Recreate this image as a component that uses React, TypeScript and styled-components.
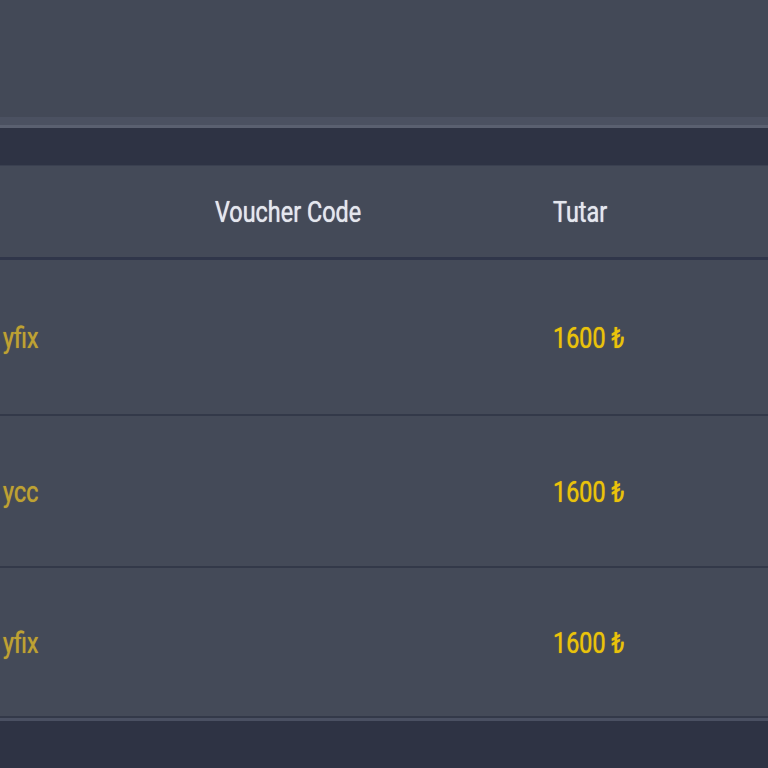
import React from "react";
import styled, { createGlobalStyle } from "styled-components";

const GlobalStyle = createGlobalStyle`
  html, body {
    margin: 0;
    padding: 0;
    background: #2e3344;
    overflow: hidden;
  }
  body {
    font-family: Roboto, "Liberation Sans", sans-serif;
  }
`;

const Page = styled.div`
  width: 768px;
  height: 768px;
  display: flex;
  flex-direction: column;
  background: #2e3344;
`;

const TopPanel = styled.div`
  height: 117px;
  background: #434957;
  border-bottom: 8px solid #4b5161;
  box-shadow: 0 3px 0 #5a6070;
`;

const Band = styled.div`
  height: 37px;
  margin-top: 3px;
  background: #2e3344;
  border-bottom: 1px solid #3a4050;
`;

const Table = styled.div`
  display: flex;
  flex-direction: column;
`;

const Row = styled.div<{ $h: number; $head?: boolean }>`
  display: grid;
  grid-template-columns: 215px 338px 1fr;
  align-items: center;
  height: ${(p) => p.$h}px;
  background: #444a58;
  border-bottom: ${(p) => (p.$head ? "3px solid #30364a" : "2px solid #333949")};
  box-sizing: border-box;
`;

const Cell = styled.div<{ $pad?: number }>`
  display: flex;
  align-items: center;
  min-width: 0;
  padding-left: ${(p) => p.$pad ?? 0}px;
`;

const Text = styled.span<{ $color: string }>`
  display: inline-block;
  white-space: nowrap;
  color: ${(p) => p.$color};
  font-size: 30px;
  font-weight: 400;
  transform: scaleX(0.78);
  transform-origin: left center;
  text-shadow: 0 0 1px ${(p) => p.$color};
`;

const BottomEdge = styled.div`
  height: 3px;
  background: #4a5062;
`;

const rows = [
  { name: "yfix", amount: "1600 ₺", h: 156 },
  { name: "ycc", amount: "1600 ₺", h: 152 },
  { name: "yfix", amount: "1600 ₺", h: 150 },
];

export default function App() {
  return (
    <Page>
      <GlobalStyle />
      <TopPanel />
      <Band />
      <Table>
        <Row $h={94} $head>
          <Cell />
          <Cell>
            <Text $color="#e4e7ee">Voucher Code</Text>
          </Cell>
          <Cell>
            <Text $color="#e4e7ee">Tutar</Text>
          </Cell>
        </Row>
        {rows.map((r, i) => (
          <Row key={i} $h={r.h}>
            <Cell $pad={3}>
              <Text $color="#bea233">{r.name}</Text>
            </Cell>
            <Cell />
            <Cell>
              <Text $color="#e9c30c">{r.amount}</Text>
            </Cell>
          </Row>
        ))}
      </Table>
      <BottomEdge />
    </Page>
  );
}
